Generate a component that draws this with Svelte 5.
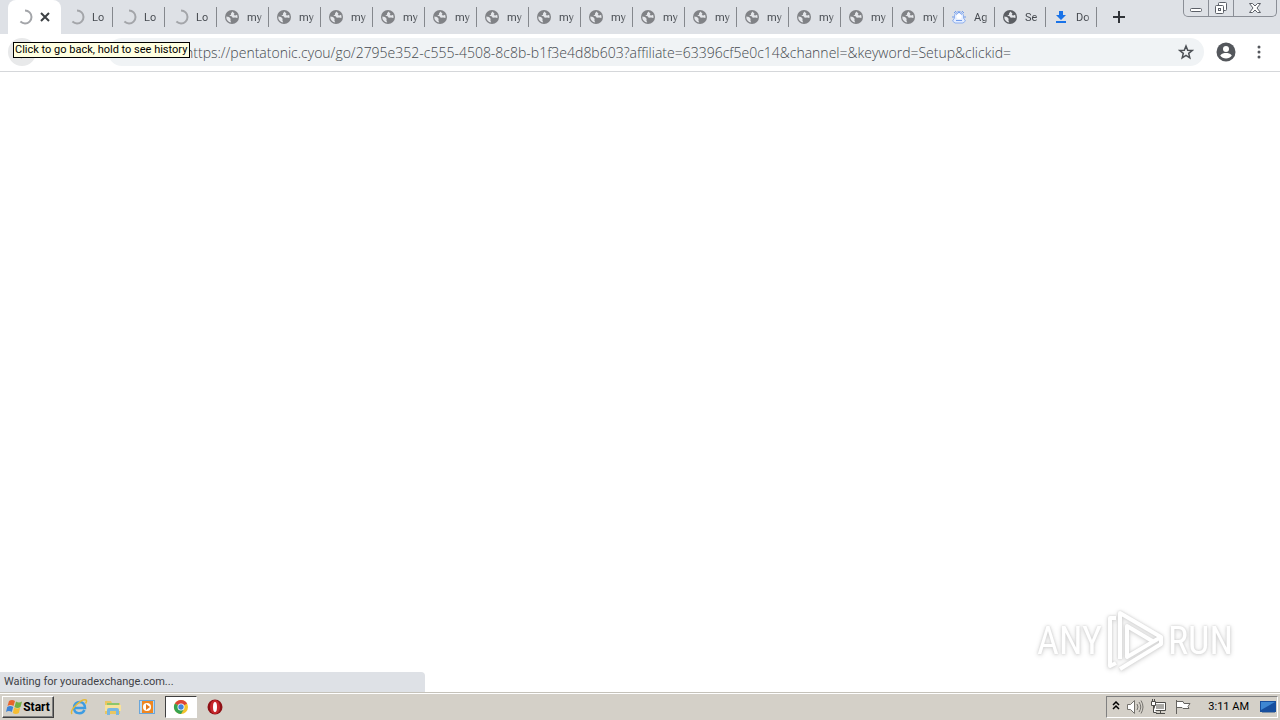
<script lang="ts">
	type Tab = { title: string; icon: string; dark?: boolean };

	const loadingTabs: Tab[] = Array.from({ length: 3 }, () => ({ title: 'Lo', icon: 'spinner' }));
	const siteTabs: Tab[] = Array.from({ length: 14 }, () => ({ title: 'my', icon: 'globe' }));
	const lastTabs: Tab[] = [
		{ title: 'Ag', icon: 'agent' },
		{ title: 'Se', icon: 'globe', dark: true },
		{ title: 'Do', icon: 'download' }
	];
	const tabs = [...loadingTabs, ...siteTabs, ...lastTabs];

	let url = $state(
		'https://pentatonic.cyou/go/2795e352-c555-4508-8c8b-b1f3e4d8b603?affiliate=63396cf5e0c14&channel=&keyword=Setup&clickid='
	);
</script>

{#snippet spinner()}
	<svg width="16" height="16" viewBox="0 0 16 16" fill="none" stroke="#a3a5a9" stroke-width="2">
		<path d="M8 1.500a6.500 6.500 0 0 1 0 13q-2.500 0-4.600-1.900" />
	</svg>
{/snippet}

{#snippet globe(color: string)}
	<svg width="16" height="16" viewBox="0 0 16 16">
		<circle cx="8" cy="8" r="7" fill={color} />
		<path d="M8.500 2.500 7 4.500v1.200L5.200 6.800l2.400.4 1.200 1.500 2.300-.2 2.300.6a5.700 5.700 0 0 0-.3-3.400l-1.800.8L9.700 6l.8-1.300zM2.300 7.400l2.800.7 1.700 1.800-.5 1.200.9 2.400a5.600 5.600 0 0 1-4.900-6.100z" fill="#e4e6ea" />
	</svg>
{/snippet}

<div class="desktop">
	<div class="tab-strip">
		<div class="tab active">
			{@render spinner()}
			<button class="close-tab" aria-label="Close tab">
				<svg width="10" height="10" viewBox="0 0 10 10" stroke="#3c4043" stroke-width="2">
					<path d="M1 1l8 8M9 1l-8 8" />
				</svg>
			</button>
		</div>
		{#each tabs as tab, i}
			<button class="tab" class:short={i >= 16} class:loading={tab.icon === 'spinner'}>
				{#if tab.icon === 'spinner'}
					{@render spinner()}
				{:else if tab.icon === 'globe'}
					{@render globe(tab.dark ? '#5b5e63' : '#808286')}
				{:else if tab.icon === 'agent'}
					<svg width="16" height="16" viewBox="0 0 16 16" fill="none">
						<path d="M3.500 9V7a4.500 4.500 0 0 1 9 0v2l2 3-2.500 2H4l-2.500-2z" fill="#e4edff" stroke="#8fb0ee" />
						<path d="M5 5.500 8 3l3 2.500M2 7v2M14 7v2M5 11.500h6M3 4l2-2M13 4l-2-2" stroke="#719bea" />
						<circle cx="8" cy="7.500" r="2.500" fill="#fff" />
					</svg>
				{:else}
					<svg width="16" height="16" viewBox="0 0 16 16" fill="#1a73e8">
						<path d="M6 2h4v4h3l-5 5-5-5h3zM3 12h10v2H3z" />
					</svg>
				{/if}
				<span class="tab-title">{tab.title}</span>
			</button>
		{/each}
		<button class="new-tab" aria-label="New tab">
			<svg width="12" height="12" viewBox="0 0 12 12" stroke="#303338" stroke-width="2">
				<path d="M6 0v12M0 6h12" />
			</svg>
		</button>
		<div class="window-controls">
			<button aria-label="Minimize">
				<svg width="14" height="14" viewBox="0 0 14 14" fill="#fff" stroke="#5c6068">
					<rect x="1.500" y="7.500" width="11" height="3" rx="1" />
				</svg>
			</button>
			<button aria-label="Restore">
				<svg width="14" height="14" viewBox="0 0 14 14" fill="#fff" stroke="#5c6068">
					<rect x="4.500" y="1.500" width="8" height="8" rx="1" />
					<rect x="1.500" y="4.500" width="8" height="8" rx="1" />
					<rect x="4.500" y="7.500" width="2" height="2" />
				</svg>
			</button>
			<button class="close" aria-label="Close">
				<svg width="14" height="14" viewBox="0 0 14 14" fill="#fff" stroke="#5c6068">
					<path d="M1.500 2.500h3L7 5l2.500-2.500h3L9 7l3.500 4.500h-3L7 9l-2.500 2.500h-3L5 7z" />
				</svg>
			</button>
		</div>
	</div>

	<div class="toolbar">
		<button class="back" aria-label="Back">
			<svg width="16" height="16" viewBox="0 0 16 16" fill="none" stroke="#b4b6b9" stroke-width="2">
				<path d="M15 8H2M8 2L2 8l6 6" />
			</svg>
		</button>
		<span class="tooltip" role="tooltip">Click to go back, hold to see history</span>
		<div class="omnibox">
			<input type="text" aria-label="Address and search bar" spellcheck="false" bind:value={url} />
			<button aria-label="Bookmark this page">
				<svg width="16" height="16" viewBox="0 0 16 16" fill="none" stroke="#4c5055" stroke-width="1.500">
					<path d="M8 2l1.700 4.200 4.500.3-3.500 2.900 1.100 4.400L8 11.400l-3.800 2.400 1.100-4.400-3.500-2.900 4.500-.3z" />
				</svg>
			</button>
		</div>
		<button class="profile" aria-label="Profile">
			<svg width="20" height="20" viewBox="0 0 20 20">
				<circle cx="10" cy="10" r="9.500" fill="#54575c" />
				<circle cx="10" cy="7" r="3" fill="#fff" />
				<path d="M4.200 13.500C5.500 11.500 8 11 10 11s4.500.5 5.800 2.500a7 7 0 0 1-11.600 0z" fill="#fff" />
			</svg>
		</button>
		<button class="menu" aria-label="Menu">
			<svg width="4" height="16" viewBox="0 0 4 16" fill="#54575c">
				<circle cx="2" cy="3" r="1.500" />
				<circle cx="2" cy="8" r="1.500" />
				<circle cx="2" cy="13" r="1.500" />
			</svg>
		</button>
	</div>

	<main class="page">
		<div class="watermark">
			<span>ANY</span>
			<svg width="58" height="64" viewBox="0 0 58 64" fill="none" stroke="#fff" stroke-width="4">
				<path d="M14 50V4l41 24-34 20V17l27 16" stroke-linejoin="round" />
				<path d="M10 9H4v48l6-3M14 60l41-25v-7" stroke-linejoin="round" />
			</svg>
			<span>RUN</span>
		</div>
		<div class="status">Waiting for youradexchange.com...</div>
	</main>

	<footer class="taskbar">
		<button class="start">
			<svg width="17" height="16" viewBox="0 0 17 16">
				<path d="M3 2q3-2 6 0L7.500 7q-3-2-6 0z" fill="#e8642c" />
				<path d="M10 2.500q3 2 6 0L14.500 8q-3 2-6 0z" fill="#72b043" />
				<path d="M1.200 8q3-2 6 0L5.800 13q-3-2-5.800 0z" fill="#3d83d6" />
				<path d="M8.200 8.600q3 2 6 0L12.800 14q-3 2-6 0z" fill="#f6bd32" />
			</svg>
			Start
		</button>
		<nav class="launchers">
			<button aria-label="Internet Explorer">
				<svg width="18" height="18" viewBox="0 0 18 18" fill="none">
					<path d="M4 10h11c0-8-11-8-11 0 0 6 8 7 10.500 2" stroke="#3d9ce2" stroke-width="2.500" />
					<path d="M2 16C-1 12 12 0 16 2c1 .5.500 2-.5 3.500" stroke="#e5b936" stroke-width="1.500" />
				</svg>
			</button>
			<button aria-label="Windows Explorer">
				<svg width="18" height="18" viewBox="0 0 18 18">
					<path d="M1 3h6l1 2h8v11H1z" fill="#eac660" />
					<path d="M3 5h12v3H3z" fill="#8cc66b" />
					<path d="M1 7h16v6H1z" fill="#f8e29a" />
					<path d="M3 17v-5q0-2 2-2h8q2 0 2 2v5h-3v-4H6v4z" fill="#78b7e2" />
				</svg>
			</button>
			<button aria-label="Media Player">
				<svg width="18" height="18" viewBox="0 0 18 18">
					<path d="M1 2h16v14H1z" fill="#6aa6da" />
					<path d="M2 3h14v12H2z" fill="#b9d9f2" />
					<path d="M4 3h11v12H4z" fill="#ef8721" />
					<circle cx="9" cy="9" r="4" fill="#fff" />
					<path d="M8 6l4 3-4 3z" fill="#e77a1c" />
				</svg>
			</button>
			<button class="running" aria-label="Google Chrome">
				<svg width="16" height="16" viewBox="0 0 16 16">
					<circle cx="8" cy="8" r="7" fill="#f3c32c" />
					<path d="M8 8 1.900 4.500a7 7 0 0 1 12.200 0z" fill="#dc4537" />
					<path d="M8 8 1.900 4.500A7 7 0 0 0 8 15l3-5z" fill="#37a350" />
					<circle cx="8" cy="8" r="3.500" fill="#fff" />
					<circle cx="8" cy="8" r="2.700" fill="#4285dc" />
				</svg>
			</button>
			<button aria-label="Opera">
				<svg width="18" height="18" viewBox="0 0 18 18">
					<circle cx="9" cy="9" r="7.500" fill="#8f1015" />
					<ellipse cx="9" cy="9" rx="5" ry="7" fill="#c7282c" />
					<ellipse cx="9" cy="9" rx="2" ry="5" fill="#fff" />
				</svg>
			</button>
		</nav>
		<div class="tray">
			<svg class="chevrons" width="8" height="12" viewBox="0 0 8 12" fill="none" stroke="#000" stroke-width="1.500">
				<path d="M1 4l3-3 3 3M1 8l3-3 3 3" />
			</svg>
			<svg width="18" height="16" viewBox="0 0 18 16" fill="#fff" stroke="#74726d">
				<path d="M1.500 5.500h3l4-4v13l-4-4h-3z" />
				<path d="M11 5q2 3 0 6M13 3q3.500 5 0 10M15 1.500q4 6.500 0 13" fill="none" />
			</svg>
			<svg width="18" height="16" viewBox="0 0 18 16" fill="#fff" stroke="#4d4c49">
				<path d="M4.500 3.500h11v8h-11zM6 14.500h9M10.500 12v2" />
				<path d="M6 5h8v5H6z" fill="#aaa9a5" stroke="none" />
				<path d="M1.500 2.500h4v4h-4zM3.500 7v6.500h3M2.500 0v2M4.500 0v2" />
			</svg>
			<svg width="18" height="16" viewBox="0 0 18 16" fill="#fff" stroke="#65635f">
				<path d="M2.500 1v14M3 2.500h6l1 2h6l-2 3 1 2H9l-1-1H3" />
			</svg>
			<time>3:11 AM</time>
			<svg width="18" height="16" viewBox="0 0 18 16">
				<path d="M1 2h16v11H1z" fill="#174f9e" />
				<path d="M2 3h14L2 11z" fill="#3e87d2" />
				<path d="M3 13h13v1H3z" fill="#7f91a6" />
			</svg>
		</div>
	</footer>
</div>

<style>
	:global(body) {
		margin: 0;
	}

	.desktop {
		display: flex;
		flex-direction: column;
		height: 100vh;
		overflow: hidden;
		background: #fff;
		color: #000;
		font-family: Roboto, 'Noto Sans', sans-serif;
		font-size: 11px;
	}

	button {
		display: flex;
		align-items: center;
		justify-content: center;
		margin: 0;
		padding: 0;
		border: 0;
		background: none;
		color: inherit;
		font: inherit;
	}

	svg {
		display: block;
		flex: none;
	}

	.tab-strip {
		display: flex;
		flex: none;
		height: 34px;
		padding: 0 3px 0 8px;
		background: #dee1e6;
	}

	.tab {
		display: flex;
		flex: 0 1 52px;
		box-sizing: border-box;
		min-width: 0;
		align-items: center;
		justify-content: flex-start;
		gap: 7px;
		padding: 0 4px 0 7px;
		color: #45494f;
		background: linear-gradient(#85888d, #85888d) right center / 1px 20px no-repeat;
	}

	.tab.short {
		flex-basis: 51px;
	}

	.tab.loading {
		padding-left: 8px;
	}

	.tab.active {
		flex-basis: 53px;
		padding-left: 9px;
		background: #fff;
		border-radius: 8px 8px 0 0;
	}

	.tab-title {
		flex: 1;
		min-width: 0;
		text-align: left;
		white-space: nowrap;
		mask-image: linear-gradient(to right, #000 60%, transparent);
	}

	.new-tab {
		flex: none;
		width: 44px;
	}

	.window-controls {
		display: flex;
		flex: none;
		height: 17px;
		margin-left: auto;
		box-sizing: border-box;
		border: 1px solid #8a8e96;
		border-top: 0;
		border-radius: 0 0 5px 5px;
	}

	.window-controls button {
		width: 25px;
		border-right: 1px solid #8a8e96;
	}

	.window-controls .close {
		width: 42px;
		border: 0;
	}

	.toolbar {
		position: relative;
		display: flex;
		flex: none;
		align-items: center;
		box-sizing: border-box;
		height: 38px;
		padding: 0 11px 1px 8px;
		border-bottom: 1px solid #d5d7da;
	}

	.back {
		width: 28px;
		height: 28px;
		border-radius: 50%;
		background: #e8e9ea;
	}

	.tooltip {
		position: absolute;
		top: 8px;
		left: 13px;
		padding: 0 2px 0 1px;
		border: 1px solid #000;
		background: #ffffe1;
		line-height: 14px;
		white-space: nowrap;
	}

	.omnibox {
		display: flex;
		flex: 1;
		align-items: center;
		height: 28px;
		margin-left: 72px;
		padding: 0 10px 0 77px;
		border-radius: 14px;
		background: #f0f3f5;
	}

	.omnibox input {
		flex: 1;
		min-width: 0;
		padding: 0;
		border: 0;
		outline: 0;
		background: none;
		color: #45494e;
		font-family: 'Open Sans', 'Noto Sans', sans-serif;
		font-size: 14px;
		font-weight: 300;
	}

	.profile {
		width: 44px;
	}

	.menu {
		width: 21px;
	}

	.page {
		position: relative;
		flex: 1;
	}

	.status {
		position: absolute;
		bottom: 1px;
		left: 0;
		width: 33.2%;
		box-sizing: border-box;
		padding-left: 4px;
		border-radius: 0 4px 0 0;
		background: #dee1e6;
		color: #3f4247;
		line-height: 20px;
	}

	.watermark {
		position: absolute;
		right: 47px;
		bottom: 20px;
		display: flex;
		align-items: center;
		gap: 4px;
		color: #fff;
		font-family: 'Liberation Sans Narrow', 'Roboto Condensed', 'Liberation Sans', sans-serif;
		font-size: 38px;
		filter: drop-shadow(0 0 1px #d0d0d0) drop-shadow(0 1px 2px #d8d8d8);
	}

	.taskbar {
		display: flex;
		flex: none;
		align-items: center;
		height: 25px;
		padding: 0 2px 1px;
		border-top: 1px solid #fff;
		box-shadow: 0 -1px #c5c2ba;
		background: #d4d0c8;
	}

	.start {
		width: 52px;
		height: 22px;
		border: 1px solid;
		border-color: #fff #404040 #404040 #fff;
		box-shadow: inset -1px -1px #808080;
		font-weight: bold;
		font-size: 12px;
		box-sizing: border-box;
	}

	.launchers {
		display: flex;
		gap: 2px;
		margin-left: 9px;
	}

	.launchers button {
		width: 32px;
		height: 22px;
		box-sizing: border-box;
	}

	.launchers .running {
		border: 1px solid;
		border-color: #404040 #fff #fff #404040;
		background: #fff;
	}

	.tray {
		display: flex;
		align-items: center;
		gap: 6px;
		height: 20px;
		margin-left: auto;
		padding: 0 0 0 5px;
		border: 1px solid;
		border-color: #808080 #fff #fff #808080;
	}

	.tray time {
		margin: 0 4px 0 10px;
	}
</style>
